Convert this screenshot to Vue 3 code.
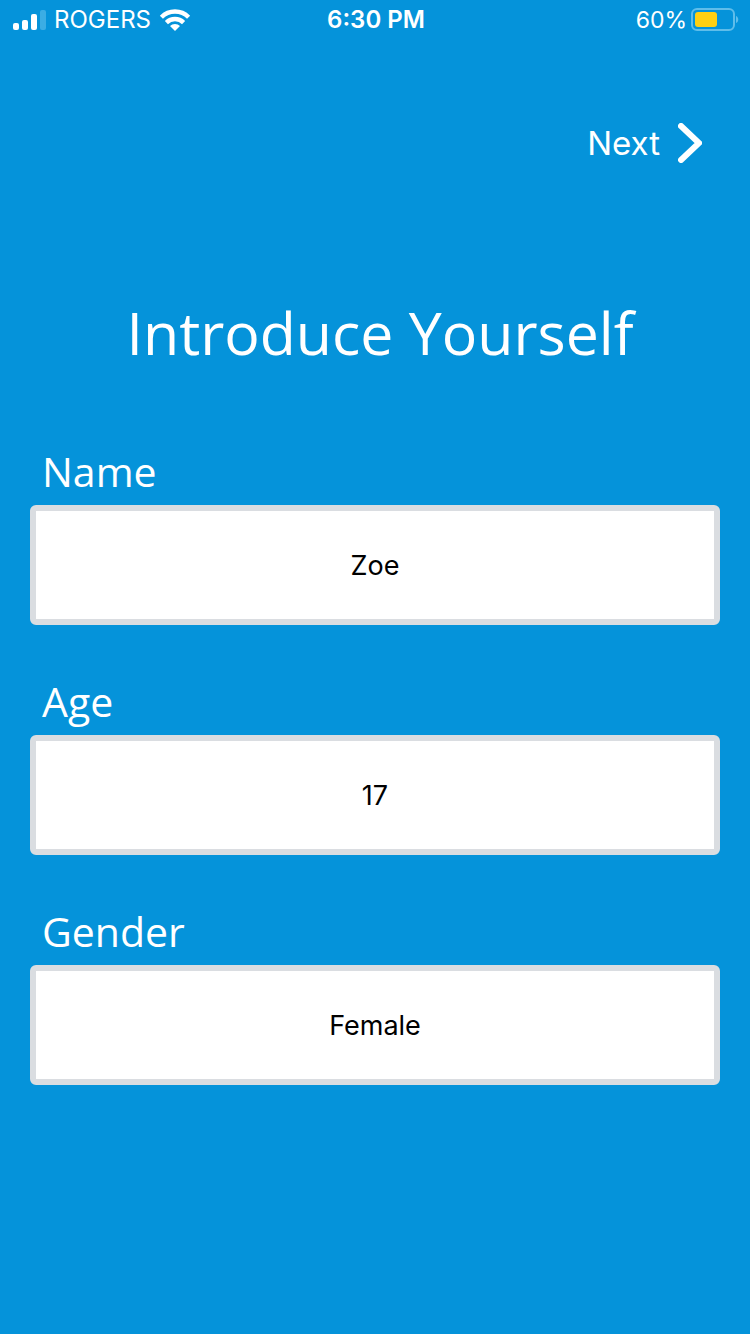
<script setup>
import { reactive } from 'vue'

const fields = reactive([
  { id: 'name', label: 'Name', value: 'Zoe' },
  { id: 'age', label: 'Age', value: '17' },
  { id: 'gender', label: 'Gender', value: 'Female' },
])
const battery = 60
</script>

<template>
  <div class="screen">
    <header class="status">
      <div class="side">
        <svg class="signal" width="34" height="20" viewBox="0 0 34 20" aria-hidden="true">
          <rect x="0" y="13" width="6" height="7" rx="2" fill="#fff" />
          <rect x="9" y="10" width="6" height="10" rx="2" fill="#fff" />
          <rect x="18" y="4" width="6" height="16" rx="2" fill="#fff" />
          <rect x="27" y="0" width="6" height="20" rx="2" fill="#3bade4" />
        </svg>
        <span class="carrier">ROGERS</span>
        <svg class="wifi" width="32" height="24" viewBox="0 0 32 24" aria-hidden="true">
          <g fill="none" stroke="#fff" stroke-width="4.4">
            <path d="M2.4 9.2a19.2 19.2 0 0 1 27.2 0" />
            <path d="M7.4 14.6a12.2 12.2 0 0 1 17.2 0" />
          </g>
          <path d="M16 23l-5-5a7 7 0 0 1 10 0z" fill="#fff" />
        </svg>
      </div>
      <span class="clock">6:30 PM</span>
      <div class="side end">
        <span class="percent">{{ battery }}%</span>
        <svg class="battery" width="48" height="24" viewBox="0 0 48 24" aria-hidden="true">
          <rect x="1" y="1" width="42" height="21" rx="5" fill="none" stroke="#5fbdea" stroke-width="2" />
          <rect x="4" y="4" width="22" height="15" rx="3" fill="#ffd012" />
          <path d="M45 8c3 1 3 6 0 7z" fill="#5fbdea" />
        </svg>
      </div>
    </header>

    <nav class="nav">
      <button type="button" class="next">
        <span>Next</span>
        <svg width="24" height="40" viewBox="0 0 24 40" aria-hidden="true">
          <path d="M3 3l18 17L3 37" fill="none" stroke="#fff" stroke-width="6" stroke-linecap="round" />
        </svg>
      </button>
    </nav>

    <main>
      <h1>Introduce Yourself</h1>
      <form @submit.prevent>
        <div v-for="field in fields" :key="field.id" class="field">
          <label :for="field.id">{{ field.label }}</label>
          <input :id="field.id" v-model="field.value" type="text" autocomplete="off" />
        </div>
      </form>
    </main>
  </div>
</template>

<style>
body {
  background: #0593da;
}
</style>

<style scoped>
.screen {
  box-sizing: border-box;
  min-height: 100vh;
  background: #0593da;
  color: #fff;
  font-family: Inter, "Liberation Sans", sans-serif;
}

.status {
  display: flex;
  align-items: center;
  height: 40px;
  padding: 0 11px 0 13px;
  font-size: 24px;
  line-height: 42px;
}

.side {
  display: flex;
  flex: 1;
  align-items: center;
}

.end {
  justify-content: flex-end;
}

.carrier {
  margin: 0 8px 0 7px;
}

.clock {
  font-weight: 600;
}

.percent {
  margin-right: 4px;
  font-size: 23px;
}

.nav {
  display: flex;
  justify-content: flex-end;
  padding: 80px 48px 0 0;
}

.next {
  display: flex;
  align-items: center;
  gap: 18px;
  height: 46px;
  padding: 0;
  border: 0;
  background: none;
  color: inherit;
  font: 400 33px/46px Inter, "Liberation Sans", sans-serif;
}

h1 {
  margin: 124px 0 0;
  padding-left: 10px;
  font: 400 59px/84px "Open Sans", "Noto Sans", sans-serif;
  text-align: center;
}

form {
  display: flex;
  flex-direction: column;
  gap: 46px;
  padding: 67px 30px 0;
}

.field {
  display: flex;
  flex-direction: column;
}

label {
  padding: 0 0 4px 12px;
  font: 400 41px/60px "Open Sans", "Noto Sans", sans-serif;
}

input {
  box-sizing: border-box;
  width: 100%;
  height: 120px;
  padding: 0;
  border: 6px solid #dadde1;
  border-radius: 6px;
  background: #fff;
  color: #000;
  font: 400 27px/40px Inter, "Liberation Sans", sans-serif;
  text-align: center;
  outline: none;
}
</style>
